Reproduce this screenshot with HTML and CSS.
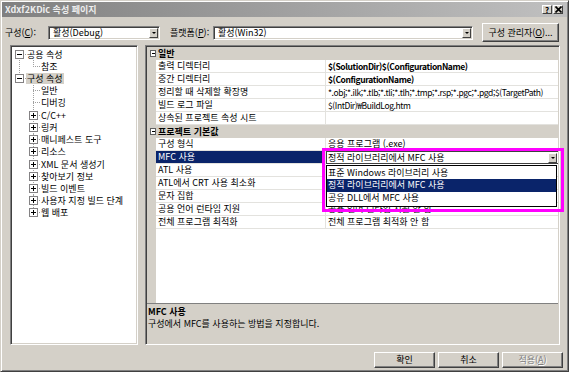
FILE: index.html
```html
<!DOCTYPE html>
<html lang="ko">
<head>
<meta charset="utf-8">
<title>Xdxf2KDic 속성 페이지</title>
<link rel="stylesheet" href="styles.css">
</head>
<body>
<div class="dialog">
  <div class="titlebar">
    <span class="title">Xdxf2KDic 속성 페이지</span>
    <span class="tbtns">
      <span class="tbtn">?</span>
      <span class="tbtn"><svg width="7" height="7" viewBox="0 0 7 7"><path d="M0.5 0.5L6.5 6.5M6.5 0.5L0.5 6.5" stroke="#000" stroke-width="1.6"/></svg></span>
    </span>
  </div>

  <div class="toolbar">
    <span class="lbl lbl1">구성(<u>C</u>):</span>
    <div class="combo combo1"><span class="ctext">활성(Debug)</span><span class="drop"></span></div>
    <span class="lbl lbl2">플랫폼(<u>P</u>):</span>
    <div class="combo combo2"><span class="ctext">활성(Win32)</span><span class="drop"></span></div>
    <button class="btn btn-cfg">구성 관리자(<u>O</u>)...</button>
  </div>

  <div class="main">
    <div class="tree">
      <div class="trow"><span class="col start"><span class="box minus"></span></span><span class="tl">공용 속성</span></div>
      <div class="trow"><span class="col pipe"></span><span class="col elbow"></span><span class="tl">참조</span></div>
      <div class="trow"><span class="col elbow"><span class="box minus"></span></span><span class="tl sel">구성 속성</span></div>
      <div class="trow"><span class="col"></span><span class="col tee"></span><span class="tl">일반</span></div>
      <div class="trow"><span class="col"></span><span class="col tee"></span><span class="tl">디버깅</span></div>
      <div class="trow"><span class="col"></span><span class="col tee"><span class="box plus"></span></span><span class="tl">C/C++</span></div>
      <div class="trow"><span class="col"></span><span class="col tee"><span class="box plus"></span></span><span class="tl">링커</span></div>
      <div class="trow"><span class="col"></span><span class="col tee"><span class="box plus"></span></span><span class="tl">매니페스트 도구</span></div>
      <div class="trow"><span class="col"></span><span class="col tee"><span class="box plus"></span></span><span class="tl">리소스</span></div>
      <div class="trow"><span class="col"></span><span class="col tee"><span class="box plus"></span></span><span class="tl">XML 문서 생성기</span></div>
      <div class="trow"><span class="col"></span><span class="col tee"><span class="box plus"></span></span><span class="tl">찾아보기 정보</span></div>
      <div class="trow"><span class="col"></span><span class="col tee"><span class="box plus"></span></span><span class="tl">빌드 이벤트</span></div>
      <div class="trow"><span class="col"></span><span class="col tee"><span class="box plus"></span></span><span class="tl">사용자 지정 빌드 단계</span></div>
      <div class="trow"><span class="col"></span><span class="col elbow"><span class="box plus"></span></span><span class="tl">웹 배포</span></div>
    </div>

    <div class="panel">
      <div class="grid">
        <div class="row cat"><span class="m"><span class="gbox"></span></span><span class="ct">일반</span></div>
        <div class="row"><span class="m"></span><span class="n">출력 디렉터리</span><span class="v b lat">$(SolutionDir)$(ConfigurationName)</span></div>
        <div class="row"><span class="m"></span><span class="n">중간 디렉터리</span><span class="v b lat">$(ConfigurationName)</span></div>
        <div class="row"><span class="m"></span><span class="n">정리할 때 삭제할 확장명</span><span class="v lat">*.obj;*.ilk;*.tlb;*.tli;*.tlh;*.tmp;*.rsp;*.pgc;*.pgd;$(TargetPath)</span></div>
        <div class="row"><span class="m"></span><span class="n">빌드 로그 파일</span><span class="v lat">$(IntDir)₩BuildLog.htm</span></div>
        <div class="row"><span class="m"></span><span class="n">상속된 프로젝트 속성 시트</span><span class="v"></span></div>
        <div class="row cat"><span class="m"><span class="gbox"></span></span><span class="ct">프로젝트 기본값</span></div>
        <div class="row"><span class="m"></span><span class="n">구성 형식</span><span class="v">응용 프로그램 (.exe)</span></div>
        <div class="row"><span class="m"></span><span class="n selrow">MFC 사용</span><span class="v edit"><span class="etext">정적 라이브러리에서 MFC 사용</span><span class="drop"></span></span></div>
        <div class="row"><span class="m"></span><span class="n">ATL 사용</span><span class="v"></span></div>
        <div class="row"><span class="m"></span><span class="n">ATL에서 CRT 사용 최소화</span><span class="v"></span></div>
        <div class="row"><span class="m"></span><span class="n">문자 집합</span><span class="v"></span></div>
        <div class="row"><span class="m"></span><span class="n">공용 언어 런타임 지원</span><span class="v">공용 언어 런타임 지원 안 함</span></div>
        <div class="row"><span class="m"></span><span class="n">전체 프로그램 최적화</span><span class="v">전체 프로그램 최적화 안 함</span></div>
      </div>
      <div class="desc">
        <div class="dtitle">MFC 사용</div>
        <div>구성에서 MFC를 사용하는 방법을 지정합니다.</div>
      </div>
    </div>
  </div>

  <div class="buttons">
    <button class="btn">확인</button>
    <button class="btn">취소</button>
    <button class="btn disabled">적용(<u>A</u>)</button>
  </div>

  <div class="droplist">
    <div class="item">표준 Windows 라이브러리 사용</div>
    <div class="item on">정적 라이브러리에서 MFC 사용</div>
    <div class="item">공유 DLL에서 MFC 사용</div>
  </div>
  <div class="mark"></div>
</div>
</body>
</html>
```

FILE: styles.css
```css
html, body {
  margin: 0;
  padding: 0;
  background: #fff;
}
body {
  font-family: "Noto Sans CJK KR", "Noto Sans", sans-serif;
  font-size: 9px;
  color: #000;
}
.dialog {
  position: relative;
  width: 569px;
  height: 372px;
  box-sizing: border-box;
  background: #d4d0c8;
  border: 1px solid;
  border-color: #d4d0c8 #404040 #404040 #d4d0c8;
  box-shadow: inset 1px 1px #fff, inset -1px -1px #808080;
  padding: 1px;
  display: flex;
  flex-direction: column;
}

/* title bar */
.titlebar {
  height: 15px;
  flex: none;
  display: flex;
  align-items: center;
  justify-content: space-between;
  padding: 0 4px 0 3px;
  background: linear-gradient(to right, #808080, #c0c0c0);
  color: #eeeeee;
  font-weight: bold;
  line-height: 15px;
}
.tbtns {
  display: flex;
  gap: 1px;
}
.tbtn {
  width: 10px;
  height: 9px;
  box-sizing: border-box;
  background: #d4d0c8;
  border: 1px solid;
  border-color: #fff #404040 #404040 #fff;
  display: flex;
  align-items: center;
  justify-content: center;
  font-size: 8px;
  line-height: 8px;
  color: #000;
}

/* toolbar */
.toolbar {
  margin-top: 6px;
  height: 19px;
  flex: none;
  display: flex;
  align-items: center;
  padding-left: 3px;
}
.lbl {
  line-height: 14px;
  white-space: nowrap;
}
.lbl1 { width: 43px; }
.lbl2 { width: 43px; margin-left: 10px; }
.combo {
  height: 14px;
  box-sizing: border-box;
  background: #fff;
  border: 1px solid;
  border-color: #808080 #fff #fff #808080;
  box-shadow: inset 1px 1px #404040, inset -1px -1px #d4d0c8;
  display: flex;
  align-items: center;
  padding: 1px;
}
.combo1 { width: 112px; }
.combo2 { width: 260px; }
.ctext {
  padding-left: 3px;
  line-height: 11px;
  white-space: nowrap;
}
.drop {
  margin-left: auto;
  width: 9px;
  height: 10px;
  box-sizing: border-box;
  background: #d4d0c8;
  border: 1px solid;
  border-color: #fff #404040 #404040 #fff;
  display: flex;
  align-items: center;
  justify-content: center;
  flex: none;
}
.drop::after {
  content: "";
  border-top: 2px solid #000;
  border-left: 2px solid transparent;
  border-right: 2px solid transparent;
}

.btn {
  font: inherit;
  color: #000;
  padding: 0;
  margin: 0;
  background: #d4d0c8;
  border: 1px solid;
  border-color: #fff #404040 #404040 #fff;
  box-shadow: inset -1px -1px #808080;
  box-sizing: border-box;
  line-height: 12px;
  white-space: nowrap;
}
.btn-cfg {
  margin-left: 9px;
  width: 77px;
  height: 19px;
}

/* main area */
.main {
  margin-top: 3px;
  height: 300px;
  flex: none;
  display: flex;
}
.tree, .panel {
  box-sizing: border-box;
  border: 1px solid;
  border-color: #808080 #fff #fff #808080;
  box-shadow: inset 1px 1px #404040, inset -1px -1px #d4d0c8;
  padding: 1px;
}
.tree {
  margin-left: 8px;
  width: 128px;
  background: #fff;
  padding-top: 2px;
  overflow: hidden;
}
.trow {
  height: 12.23px;
  display: flex;
  align-items: stretch;
  white-space: nowrap;
}
.col {
  width: 14px;
  flex: none;
  display: flex;
  align-items: center;
  padding-left: 3px;
  box-sizing: border-box;
}
.tl {
  padding: 0 1px;
  line-height: 11px;
  align-self: center;
}
.tl.sel {
  background: #d4d0c8;
}
.pipe {
  background: repeating-linear-gradient(to bottom, #a0a0a0 0 1px, transparent 1px 2px) 7px 0 / 1px 100% no-repeat;
}
.tee {
  background:
    repeating-linear-gradient(to right, #a0a0a0 0 1px, transparent 1px 2px) 7px 50% / 7px 1px no-repeat,
    repeating-linear-gradient(to bottom, #a0a0a0 0 1px, transparent 1px 2px) 7px 0 / 1px 100% no-repeat;
}
.elbow {
  background:
    repeating-linear-gradient(to right, #a0a0a0 0 1px, transparent 1px 2px) 7px 50% / 7px 1px no-repeat,
    repeating-linear-gradient(to bottom, #a0a0a0 0 1px, transparent 1px 2px) 7px 0 / 1px 50% no-repeat;
}
.start {
  background:
    repeating-linear-gradient(to right, #a0a0a0 0 1px, transparent 1px 2px) 7px 50% / 7px 1px no-repeat,
    repeating-linear-gradient(to bottom, #a0a0a0 0 1px, transparent 1px 2px) 7px 100% / 1px 50% no-repeat;
}
.box {
  width: 9px;
  height: 9px;
  box-sizing: border-box;
  border: 1px solid #848284;
  background: #fff;
}
.box.minus {
  background: linear-gradient(#000, #000) center / 5px 1px no-repeat, #fff;
}
.box.plus {
  background:
    linear-gradient(#000, #000) center / 5px 1px no-repeat,
    linear-gradient(#000, #000) center / 1px 5px no-repeat,
    #fff;
}

/* property grid panel */
.panel {
  margin-left: 7px;
  width: 415px;
  display: flex;
  flex-direction: column;
  padding: 1px;
}
.grid {
  height: 256px;
  flex: none;
  background: linear-gradient(to right, #d4d0c8 9px, #fff 9px);
}
.row {
  height: 13px;
  display: flex;
  white-space: nowrap;
}
.row .m {
  width: 9px;
  flex: none;
  display: flex;
  align-items: center;
  justify-content: center;
}
.row .n {
  width: 170px;
  flex: none;
  box-sizing: border-box;
  border-right: 1px solid #e3e2de;
  border-bottom: 1px solid #e3e2de;
  padding-left: 2px;
  line-height: 12px;
  overflow: hidden;
}
.row .n.selrow {
  background: #0a246a;
  color: #fff;
}
.row .v {
  flex: 1;
  box-sizing: border-box;
  border-bottom: 1px solid #e3e2de;
  padding-left: 2px;
  line-height: 12px;
  overflow: hidden;
  color: #000;
}
.row .v.lat {
  font-size: 8.5px;
  letter-spacing: -0.4px;
}
.row .v.b {
  font-weight: bold;
}
.row .v.edit {
  display: flex;
  align-items: center;
  background: #fff;
  border: 1px solid #404040;
  border-right-width: 0;
  padding-left: 1px;
  padding-right: 1px;
}
.row .v.edit .drop {
  height: 10px;
}
.row.cat {
  background: #d4d0c8;
}
.row .ct {
  padding-left: 2px;
  font-weight: bold;
  line-height: 13px;
}
.gbox {
  width: 7px;
  height: 7px;
  box-sizing: border-box;
  border: 1px solid #606060;
  background: linear-gradient(#000, #000) center / 3px 1px no-repeat, #fff;
  margin-left: 3px;
}

.desc {
  flex: 1;
  border-top: 1px solid #808080;
  padding: 2px 1px;
  line-height: 11.5px;
  color: #000;
}
.dtitle {
  font-weight: bold;
}

/* bottom buttons */
.buttons {
  margin-top: 7px;
  height: 16px;
  flex: none;
  display: flex;
  justify-content: flex-end;
  gap: 3px;
  padding-right: 4px;
}
.buttons .btn {
  width: 61px;
  height: 16px;
}
.btn.disabled {
  color: #808080;
  text-shadow: 1px 1px #fff;
}

/* open dropdown list (overlay) */
.droplist {
  position: absolute;
  left: 325px;
  top: 164px;
  width: 231px;
  height: 42px;
  box-sizing: border-box;
  border: 1px solid #000;
  background: #fff;
  padding-top: 0.5px;
}
.droplist .item {
  height: 12.5px;
  line-height: 12.5px;
  padding-left: 1px;
  white-space: nowrap;
}
.droplist .item.on {
  background: #0a246a;
  color: #fff;
}

/* magenta annotation frame */
.mark {
  position: absolute;
  left: 321px;
  top: 147px;
  width: 242px;
  height: 64px;
  box-sizing: border-box;
  border: 3px solid #ff00ff;
  pointer-events: none;
}
```
